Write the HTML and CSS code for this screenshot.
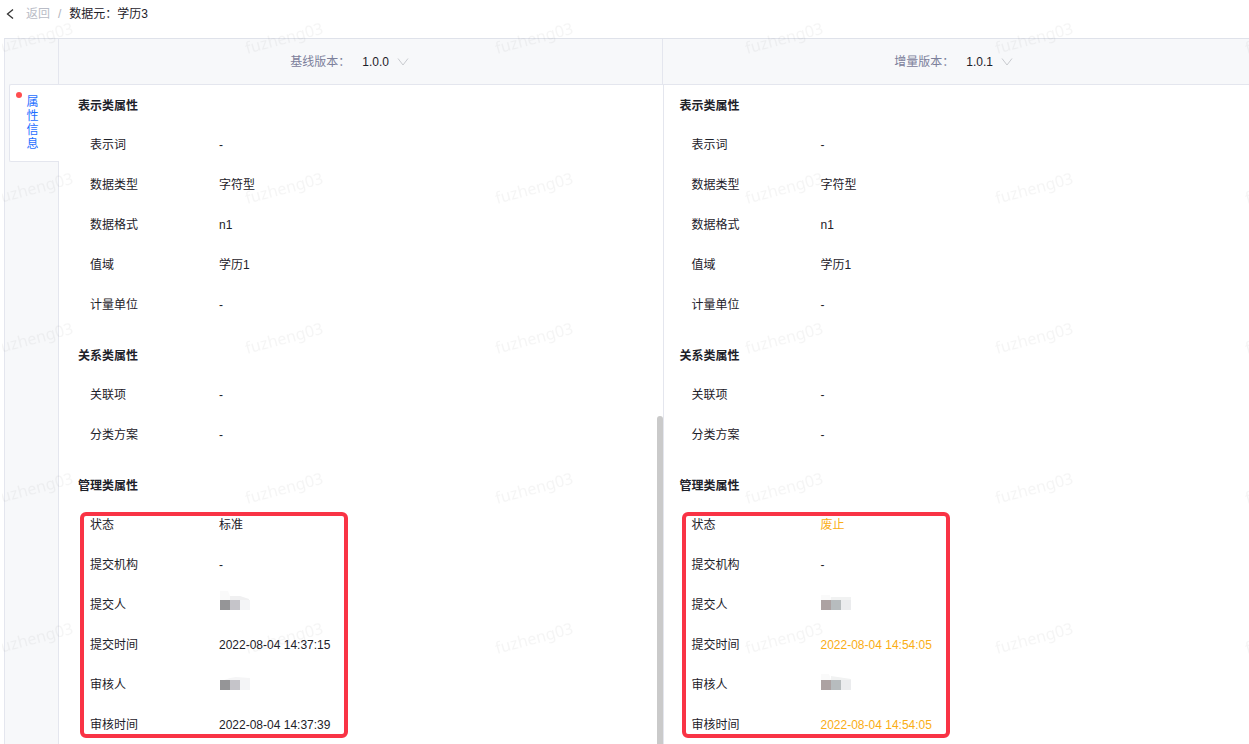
FILE: index.html
```html
<!DOCTYPE html>
<html lang="zh-CN">
<head>
    <meta charset="UTF-8">
    <meta name="viewport" content="width=device-width, initial-scale=1.0">
    <title>数据元：学历3</title>
    <link rel="stylesheet" href="styles.css">
</head>
<body>
    <nav class="breadcrumb">
        <svg class="back-icon" width="8" height="12" viewBox="0 0 8 12" fill="none" stroke="#333" stroke-width="1.3"><path d="M7 1.5 1.5 6 7 10.5"/></svg>
        <a href="#">返回</a>
        <span class="separator">/</span>
        <span>数据元：学历3</span>
    </nav>

    <div class="compare">
        <aside class="sidebar">
            <button type="button" class="tab"><span class="dot"></span><span class="tab-text">属性信息</span></button>
        </aside>

        <main class="panel">
            <header class="versions">
                <div class="version">
                    <label for="base-version">基线版本：</label>
                    <div class="picker">
                        <select id="base-version"><option>1.0.0</option></select>
                        <svg width="12" height="8" viewBox="0 0 12 8" fill="none" stroke="#c8cacf"><path d="M1 .5 6 7 11 .5"/></svg>
                    </div>
                </div>
                <div class="version">
                    <label for="new-version">增量版本：</label>
                    <div class="picker">
                        <select id="new-version"><option>1.0.1</option></select>
                        <svg width="12" height="8" viewBox="0 0 12 8" fill="none" stroke="#c8cacf"><path d="M1 .5 6 7 11 .5"/></svg>
                    </div>
                </div>
            </header>

            <div class="columns">
                <div class="column base">
                    <section>
                        <h2>表示类属性</h2>
                        <dl>
                            <div><dt>表示词</dt><dd>-</dd></div>
                            <div><dt>数据类型</dt><dd>字符型</dd></div>
                            <div><dt>数据格式</dt><dd>n1</dd></div>
                            <div><dt>值域</dt><dd>学历1</dd></div>
                            <div><dt>计量单位</dt><dd>-</dd></div>
                        </dl>
                    </section>
                    <section>
                        <h2>关系类属性</h2>
                        <dl>
                            <div><dt>关联项</dt><dd>-</dd></div>
                            <div><dt>分类方案</dt><dd>-</dd></div>
                        </dl>
                    </section>
                    <section>
                        <h2>管理类属性</h2>
                        <dl class="marked">
                            <div><dt>状态</dt><dd>标准</dd></div>
                            <div><dt>提交机构</dt><dd>-</dd></div>
                            <div><dt>提交人</dt><dd>
                                <svg class="mosaic" width="32" height="20" viewBox="0 0 32 20"><path fill="#fafafa" d="M1 1h8l2 5v4H1z"/><path fill="#f0f0f1" d="M11 6h10l9 3v1H11z"/><path fill="#959597" d="M1 10h10v10H1z"/><path fill="#c5c4c9" d="M11 10h10v10H11z"/><path fill="#f4f5f7" d="M21 10h10v10H21z"/></svg>
                            </dd></div>
                            <div><dt>提交时间</dt><dd>2022-08-04 14:37:15</dd></div>
                            <div><dt>审核人</dt><dd>
                                <svg class="mosaic" width="32" height="20" viewBox="0 0 32 20"><path fill="#f5f5f6" d="M11 8l6-1 14 1v2H5z"/><path fill="#959597" d="M1 10h10v10H1z"/><path fill="#c5c4c9" d="M11 10h10v10H11z"/><path fill="#f4f5f7" d="M21 10h10v10H21z"/></svg>
                            </dd></div>
                            <div><dt>审核时间</dt><dd>2022-08-04 14:37:39</dd></div>
                        </dl>
                    </section>
                    <div class="scroll-thumb"></div>
                </div>

                <div class="column">
                    <section>
                        <h2>表示类属性</h2>
                        <dl>
                            <div><dt>表示词</dt><dd>-</dd></div>
                            <div><dt>数据类型</dt><dd>字符型</dd></div>
                            <div><dt>数据格式</dt><dd>n1</dd></div>
                            <div><dt>值域</dt><dd>学历1</dd></div>
                            <div><dt>计量单位</dt><dd>-</dd></div>
                        </dl>
                    </section>
                    <section>
                        <h2>关系类属性</h2>
                        <dl>
                            <div><dt>关联项</dt><dd>-</dd></div>
                            <div><dt>分类方案</dt><dd>-</dd></div>
                        </dl>
                    </section>
                    <section>
                        <h2>管理类属性</h2>
                        <dl class="marked">
                            <div><dt>状态</dt><dd class="changed">废止</dd></div>
                            <div><dt>提交机构</dt><dd>-</dd></div>
                            <div><dt>提交人</dt><dd>
                                <svg class="mosaic" width="32" height="20" viewBox="0 0 32 20"><path fill="#fafafa" d="M0 5h9l1 5H0z"/><path fill="#f1f2f2" d="M10 7h20v3H10z"/><path fill="#aca2a2" d="M0 10h10v10H0z"/><path fill="#b7bcbe" d="M10 10h10v10H10z"/><path fill="#ebecee" d="M20 10h10v10H20z"/></svg>
                            </dd></div>
                            <div><dt>提交时间</dt><dd class="changed">2022-08-04 14:54:05</dd></div>
                            <div><dt>审核人</dt><dd>
                                <svg class="mosaic" width="32" height="20" viewBox="0 0 32 20"><path fill="#fafafa" d="M0 4h8l2 6H0z"/><path fill="#f1f2f2" d="M10 6l20 3v1H10z"/><path fill="#aca2a2" d="M0 10h10v10H0z"/><path fill="#b7bcbe" d="M10 10h10v10H10z"/><path fill="#ebecee" d="M20 10h10v10H20z"/></svg>
                            </dd></div>
                            <div><dt>审核时间</dt><dd class="changed">2022-08-04 14:54:05</dd></div>
                        </dl>
                    </section>
                </div>
            </div>
        </main>
    </div>

    <!-- user watermark, tiled over the page -->
    <svg class="watermark" width="100%" height="100%" aria-hidden="true">
        <defs>
            <pattern id="mark" x="2" y="15" width="250" height="150" patternUnits="userSpaceOnUse">
                <text x="-5" y="39" transform="rotate(-15 -5 39)">fuzheng03</text>
                <text x="245" y="39" transform="rotate(-15 245 39)">fuzheng03</text>
            </pattern>
        </defs>
        <rect x="2" width="100%" height="100%" fill="url(#mark)"/>
    </svg>
</body>
</html>
```
FILE: styles.css
```css
* {
    box-sizing: border-box;
}

body {
    display: flex;
    flex-direction: column;
    height: 100vh;
    margin: 0;
    overflow: hidden;
    background-color: #fff;
    color: #1d2129;
    font-family: "Liberation Sans", "Noto Sans CJK SC", sans-serif;
    font-size: 12px;
    line-height: 20px;
}

.breadcrumb {
    display: flex;
    align-items: center;
    flex: none;
    height: 38px;
    padding: 0 6px 10px;
}

.breadcrumb a {
    margin-left: 12px;
    color: #b9bcc6;
    text-decoration: none;
}

.separator {
    margin: 0 8px;
    color: #b0b3bd;
}

.compare {
    display: flex;
    flex: 1;
    min-height: 0;
    margin-left: 4px;
    border-top: 1px solid #dfe2ea;
    border-left: 1px solid #e4e6ee;
    background-color: #f7f8fa;
}

.sidebar {
    flex: none;
    width: 54px;
    padding: 45px 0 0 4px;
    border-right: 1px solid #e4e6ee;
}

.tab {
    position: relative;
    display: flex;
    align-items: center;
    justify-content: center;
    width: 50px;
    height: 78px;
    padding: 0 4px 0 0;
    border: 1px solid #e4e6ee;
    border-right: none;
    border-radius: 2px 0 0 2px;
    background-color: #fff;
    color: #1e6fff;
    font: inherit;
    line-height: 14px;
}

.tab-text {
    width: 12px;
    word-break: break-all;
}

.dot {
    position: absolute;
    top: 7px;
    left: 6px;
    width: 6px;
    height: 6px;
    border-radius: 50%;
    background-color: #ff4d4f;
}

.panel {
    display: flex;
    flex-direction: column;
    flex: 1;
    margin-right: -17px;
}

.versions {
    display: grid;
    grid-template-columns: 1fr 1fr;
    flex: none;
    height: 46px;
    border-bottom: 1px solid #e4e6ee;
}

.version {
    display: flex;
    align-items: center;
    justify-content: center;
    gap: 12px;
}

.version:first-child {
    border-right: 1px solid #e4e6ee;
}

.version label {
    color: #7c809b;
}

.picker {
    display: flex;
    align-items: center;
    width: 68px;
}

.picker select {
    width: 35px;
    padding: 0;
    border: none;
    appearance: none;
    background: none;
    color: #1d2129;
    font: inherit;
}

.columns {
    display: grid;
    grid-template-columns: 1fr 1fr;
    flex: 1;
    min-height: 0;
    background-color: #fff;
}

.column {
    position: relative;
    min-height: 0;
    padding-left: 16px;
    border-left: 1px solid #e4e6ee;
    overflow: hidden;
}

.column.base {
    padding-left: 19px;
    border-left: none;
}

section {
    margin-bottom: 10px;
}

h2 {
    margin: 0;
    padding-top: 2px;
    font-size: 12px;
    font-weight: bold;
    line-height: 38px;
}

dl {
    margin: 0;
    padding-left: 12px;
}

dl > div {
    display: flex;
    align-items: center;
    height: 40px;
}

dt {
    width: 129px;
}

dd {
    margin: 0;
}

.changed {
    color: #faad14;
}

.mosaic {
    display: block;
    margin-bottom: 10px;
}

.marked {
    position: relative;
}

/* red highlight drawn round the rows */
.marked::after {
    content: "";
    position: absolute;
    top: 7px;
    left: 2px;
    box-sizing: border-box;
    width: 268px;
    height: 226px;
    border: 4px solid #f93345;
    border-radius: 6px;
}

.scroll-thumb {
    position: absolute;
    top: 331px;
    right: 0;
    bottom: 0;
    width: 6px;
    border-radius: 3px 3px 0 0;
    background-color: #cacaca;
}

.watermark {
    position: fixed;
    top: 0;
    left: 0;
    pointer-events: none;
}

.watermark text {
    fill: #000;
    fill-opacity: 0.04;
    font-family: "Noto Sans", sans-serif;
    font-size: 16px;
}
```
